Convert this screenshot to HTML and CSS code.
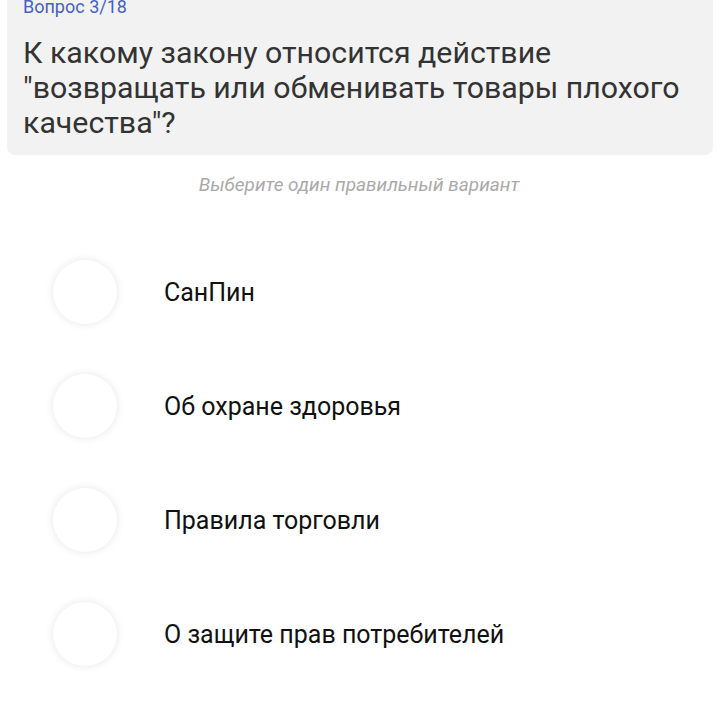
FILE: index.html
```
<!DOCTYPE html>
<html lang="ru">
<head>
  <meta charset="UTF-8" />
  <meta name="viewport" content="width=device-width, initial-scale=1.0" />
  <title>Вопрос 3/18</title>
  <link rel="stylesheet" href="styles.css">
</head>
<body>

  <div class="question-card">
    <div class="counter">Вопрос 3/18</div>
    <h1 class="question">К какому закону относится действие "возвращать или обменивать товары плохого качества"?</h1>
  </div>

  <div class="hint">Выберите один правильный вариант</div>

  <ul class="answers">
    <li class="answer"><span class="radio"></span><span class="answer-text">СанПин</span></li>
    <li class="answer"><span class="radio"></span><span class="answer-text">Об охране здоровья</span></li>
    <li class="answer"><span class="radio"></span><span class="answer-text">Правила торговли</span></li>
    <li class="answer"><span class="radio"></span><span class="answer-text">О защите прав потребителей</span></li>
  </ul>

</body>
</html>
```

FILE: styles.css
```
* { box-sizing: border-box; margin: 0; padding: 0; }
body {
  background: #fff;
  font-family: Roboto, "Noto Sans", sans-serif;
  color: #111;
  overflow: hidden;
}
.question-card {
  background: #f2f2f2;
  margin: -5px 5px 0 7px;
  padding: 0 16px 15px;
  border-radius: 0 0 8px 8px;
}
.counter {
  color: #4561c2;
  font-size: 18px;
  line-height: 24px;
}
.question {
  font-size: 30.3px;
  font-weight: normal;
  line-height: 35px;
  color: #333;
  margin-top: 16px;
}
.hint {
  text-align: center;
  font-style: italic;
  font-size: 19px;
  line-height: 24px;
  color: #aaa;
  margin-top: 18px;
}
.answers {
  list-style: none;
  margin-top: 38px;
}
.answer {
  display: flex;
  align-items: center;
  height: 114px;
  padding-left: 53px;
}
.radio {
  width: 64px;
  height: 64px;
  border-radius: 50%;
  background: #fff;
  box-shadow: 0 0 9px rgba(0, 0, 0, 0.1);
  flex-shrink: 0;
}
.answer-text {
  font-size: 25px;
  margin-left: 47px;
  color: #111;
}
```
